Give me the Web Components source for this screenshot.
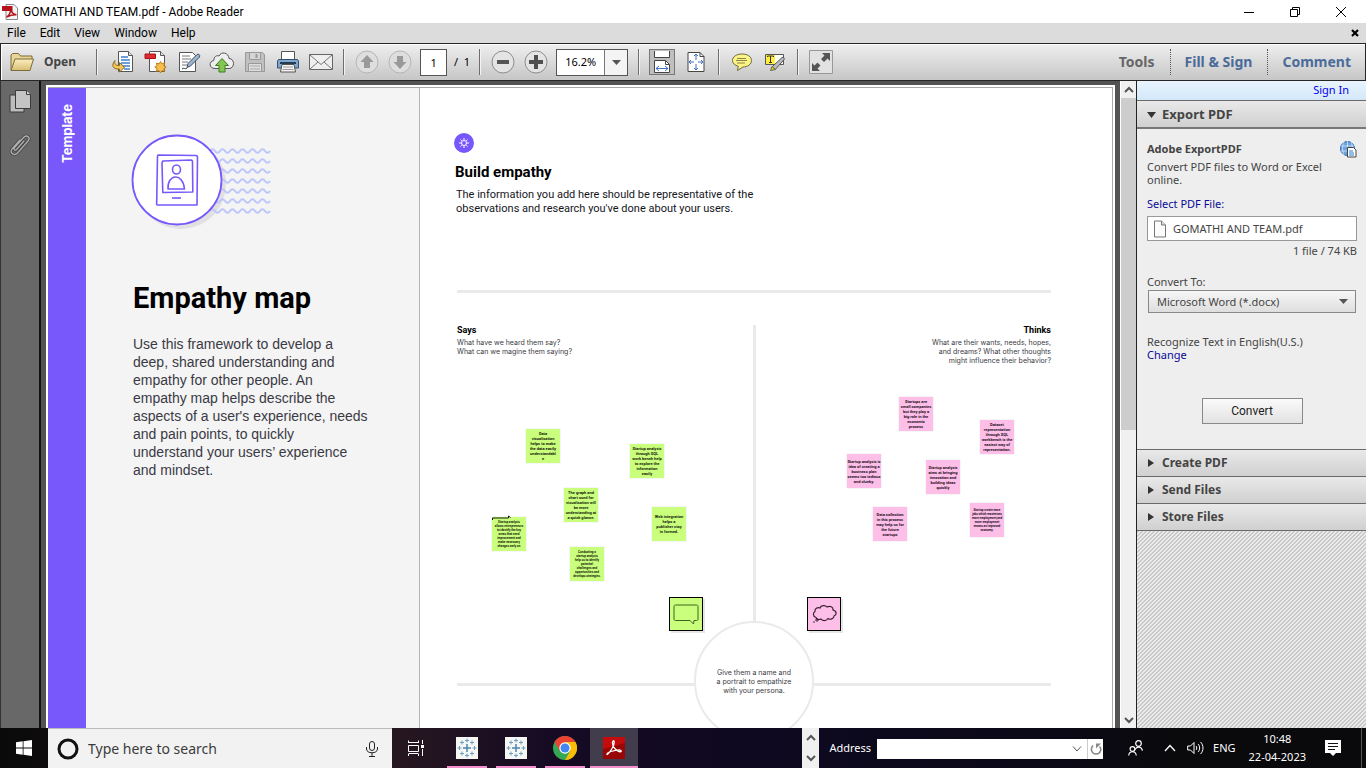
<!DOCTYPE html>
<html lang="en">
<head>
<meta charset="utf-8">
<title>GOMATHI AND TEAM.pdf - Adobe Reader</title>
<style>
html, body { margin: 0; height: 100%; }
body { font: 11px/16px "Noto Sans", "Open Sans", sans-serif; color: #333; overflow: hidden; background: #535353; }
</style>
</head>
<body>
<reader-app></reader-app>
<script>
const ICONS = {
  reader: [16, 16, `<path d="M4 .5h8l3.500 3.500v11.500h-11.500z" fill="#f4f4f4" stroke="#888"/><path d="M0 2h10.500v5h-10.500z" fill="#b5121b"/><path d="M4.500 13c2-1 4-4.500 4.300-8 .8 4 2.500 5.500 5.700 5.700-3.500-.2-6 .3-10 2.300z" fill="none" stroke="#b5121b" stroke-width="1.500"/>`],
  minimize: [10, 10, `<path d="M0 5.500h10" stroke="#000"/>`],
  restore: [10, 10, `<path d="M.5 2.500h7v7h-7zM2.500 2.500v-2h7v7h-2" fill="none" stroke="#000"/>`],
  close: [10, 10, `<path d="M0 0l10 10M10 0l-10 10" stroke="#000"/>`],
  closeBold: [8, 8, `<path d="M1 1l6 6M7 1l-6 6" stroke="#000" stroke-width="2.200"/>`],
  folder: [24, 20, `<defs><linearGradient id="a" x1="0" y1="0" x2="0" y2="1"><stop offset="0" stop-color="#fbefc0"/><stop offset="1" stop-color="#d9bd72"/></linearGradient></defs><path d="M1 18v-15l1.500-1.500h6l2 2.500h11.500v5" fill="#e9d595" stroke="#7a6a3c"/><path d="M1 18.500l4-11.500h18.500l-3.500 11.500z" fill="url(#a)" stroke="#7a6a3c"/>`],
  convert: [24, 24, `<path d="M7.500 1.500h10l4 4v16h-14z" fill="#fff" stroke="#555"/><path d="M17.500 1.500v4h4" fill="#ddd" stroke="#555"/><path d="M10 7h7M10 10h9M10 13h9M12 16h7M13 19h6" stroke="#3f7fcf" stroke-width="1.300"/><path d="M4 10.500c-4 4.500-2.500 9 4.500 8.500v3l5-4.700-5-4.800v3c-4 .5-5.500-2-4.500-5z" fill="#f3c55a" stroke="#8f6a17"/>`],
  create: [24, 24, `<path d="M5.500 1.500h11l4 4v16h-15z" fill="#fff" stroke="#555"/><path d="M16.500 1.500v4h4" fill="#ddd" stroke="#555"/><path d="M1 4h10.500v4.500h-10.500z" fill="#dd2c31" stroke="#a81318"/><path d="M16.500 11.500l1.400 2.300 2.700-.7-.7 2.700 2.300 1.400-2.300 1.400.7 2.700-2.700-.7-1.400 2.300-1.400-2.300-2.700.7.7-2.700-2.300-1.400 2.300-1.400-.7-2.700 2.700.7z" fill="#f7bd4d" stroke="#b87d18"/>`],
  sign: [24, 24, `<path d="M2.500 2.500h13l3 3v16h-16z" fill="#fff" stroke="#555"/><path d="M5 6h8M5 9h9M5 12h6M5 15h5" stroke="#777"/><path d="M5 19c2-2 3 1 5-1" fill="none" stroke="#333"/><path d="M10 17.500l1-4 9-9c1.500-1 3.500.5 2.500 2.500l-9 9z" fill="#9fb5cd" stroke="#3d5067"/>`],
  cloud: [26, 24, `<path d="M6 18.500c-6 0-6.500-7-1.200-8 0-4 3-5.500 5.300-4.500 2-5 9.500-3.500 9.900 2.500 6 0 6 10 0 10z" fill="#eee" stroke="#555"/><path d="M13 8.500l6.500 7h-3.500v6.500h-6v-6.500h-3.500z" fill="#83c554" stroke="#3d7c20"/>`],
  save: [22, 22, `<path d="M1.500 1.500h17l2 2v17h-19z" fill="#c0c0c0" stroke="#999"/><path d="M5.500 1.500h11v7h-11z" fill="#d6d6d6" stroke="#999"/><path d="M12.500 3v4" stroke="#999" stroke-width="2"/><path d="M4.500 12.500h13v8h-13z" fill="#dedede" stroke="#999"/><path d="M6 15h10M6 18h10" stroke="#aaa"/>`],
  print: [24, 24, `<path d="M5.500 1.500h13v9h-13z" fill="#fff" stroke="#555"/><path d="M2.500 9.500h19l1 1.500v7h-21v-7z" fill="#7fa6cf" stroke="#35516f"/><path d="M4 13h16" stroke="#263c55" stroke-width="2"/><path d="M6 14.500h12l1.500 7.500h-15z" fill="#f4f4f4" stroke="#555"/><path d="M7 17h10M6.500 19.500h11" stroke="#999"/>`],
  mail: [24, 18, `<path d="M.5 1.500h23v15h-23z" fill="#efefef" stroke="#666"/><path d="M1 2l11 9.500 11-9.500M1 16l8-7M23 16l-8-7" fill="none" stroke="#777"/>`],
  up: [24, 24, `<circle cx="12" cy="12" r="11" fill="#dedede" stroke="#b5b5b5"/><path d="M12 5l6.500 7h-3.500v6h-6v-6h-3.500z" fill="#999"/>`],
  down: [24, 24, `<circle cx="12" cy="12" r="11" fill="#dedede" stroke="#b5b5b5"/><path d="M12 19l6.500-7h-3.500v-6h-6v6h-3.500z" fill="#999"/>`],
  minus: [24, 24, `<circle cx="12" cy="12" r="11" fill="#e4e4e4" stroke="#8c8c8c"/><path d="M6 10h12v4h-12z" fill="#555"/>`],
  plus: [24, 24, `<circle cx="12" cy="12" r="11" fill="#e4e4e4" stroke="#8c8c8c"/><path d="M10 5h4v5h5v4h-5v5h-4v-5h-5v-4h5z" fill="#505050"/>`],
  fitWidth: [18, 22, `<path d="M1.500 0v6.500h15v-6.500" fill="#fff" stroke="#444"/><path d="M1.500 21.500v-12h11l4 4v8z" fill="#fff" stroke="#444"/><path d="M12.500 9.500v4h4" fill="none" stroke="#444"/><path d="M3 17.500h12M6 15l-3 2.500 3 2.500M12 15l3 2.500-3 2.500" fill="none" stroke="#3f6fc0"/>`],
  fitPage: [18, 22, `<path d="M1 1.500h12l4 4v15h-16z" fill="#fff" stroke="#444"/><path d="M13 1.500v4h4" fill="none" stroke="#444"/><path d="M9 3v6M9 13v6M2 11h5M11 11h5M7 5l2-2 2 2M7 17l2 2 2-2M4 9l-2 2 2 2M14 9l2 2-2 2" fill="none" stroke="#3f6fc0"/>`],
  comment: [22, 20, `<path d="M11 2c5.500 0 9.500 2.700 9.500 6.500s-4 6.500-8.500 6.500l-5.500 3.500.8-4.200c-3.500-1-5.800-3-5.800-5.800 0-3.800 4-6.500 9.500-6.500z" fill="#fdf487" stroke="#6d6a3a"/><path d="M6 6.500h9M5 8.500h11M6 11h8" stroke="#8a8547"/>`],
  highlight: [22, 20, `<path d="M1.500 2.500h18v10h-18z" fill="#fff" stroke="#555"/><path d="M2 3h9v9h-9z" fill="#ffee3d"/><path d="M3.500 5v-1h6v1M6.500 4v6.500M5 10.500h3" fill="none" stroke="#333"/><path d="M8 15l10-9.500c1.500-.8 3 .8 2 2.200l-9 10z" fill="#bbb" stroke="#555"/><path d="M6.500 18.500l1.500-4 3.500 3z" fill="#e8d400" stroke="#666"/>`],
  full: [24, 24, `<path d="M.5 .5h23v23h-23z" fill="#e2e2e2" stroke="#999"/><path d="M21 3v8l-2.500-2.500-3.500 3.500-3-3 3.500-3.500-2.500-2.500zM3 21v-8l2.500 2.500 3-3 3 3-3 3 2.500 2.500z" fill="#555"/>`],
  pages: [22, 24, `<path d="M1 6h14v17h-14z" fill="#bcbcbc" stroke="#3b3b3b"/><path d="M6.500 1.500h11l4 4v14h-15z" fill="#c4c4c4" stroke="#3b3b3b"/><path d="M17.500 1.500v4h4" fill="#ddd" stroke="#3b3b3b"/>`],
  clip: [22, 24, `<g fill="none" stroke-linecap="round" stroke-linejoin="round"><path id="c" d="M15 8l-7.500 8.500c-1.500 1.500-3.500 0-2-2l9.500-10.500c3-2.500 6.500.5 4.500 3.500l-11 12.500c-3.500 3.500-8 0-5.500-4l8-9" stroke="#474747" stroke-width="3"/><path d="M15 8l-7.500 8.500c-1.500 1.500-3.500 0-2-2l9.500-10.500c3-2.500 6.500.5 4.500 3.500l-11 12.500c-3.500 3.500-8 0-5.500-4l8-9" stroke="#b0b0b0" stroke-width="1.300"/></g>`],
  globe: [17, 17, `<circle cx="7.500" cy="7.500" r="7" fill="#6ba3dc" stroke="#2d68a8"/><path d="M1 5h13M1 10h13M7.500 0v15M4 1c-2 4-2 9 0 13M11 1c2 4 2 9 0 13" fill="none" stroke="#d7e9fa" stroke-width=".8"/><path d="M7.500 6.500h6l2.500 2.500v7h-8.500z" fill="#fff" stroke="#444"/><path d="M9 10h4M9 12h5M9 14h5" stroke="#2d78c8"/>`],
  file: [14, 18, `<path d="M1.500 1h7l4 4v12h-11z" fill="#fcfcfc" stroke="#777"/><path d="M8.500 1v4h4" fill="#ddd" stroke="#777"/>`],
  triDown: [9, 7, `<path d="M0 1h9l-4.500 6z" fill="#333"/>`],
  triRight: [9, 8, `<path d="M1 0l6 4-6 4z" fill="#333"/>`],
  chevUp: [10, 8, `<path d="M1 6l4-4 4 4" fill="none" stroke="#555" stroke-width="2"/>`],
  chevDown: [10, 8, `<path d="M1 2l4 4 4-4" fill="none" stroke="#555" stroke-width="2"/>`],
  caret: [9, 5, `<path d="M0 0h9l-4.500 5z" fill="#555"/>`],
  win: [16, 16, `<path d="M0 2.300l6.700-1v6.200h-6.700zM7.500 1.200l8.500-1.200v7.500h-8.500zM0 8.400h6.700v6.300l-6.700-1zM7.500 8.400h8.500v7.600l-8.500-1.200z" fill="#fff"/>`],
  cortana: [22, 22, `<circle cx="11" cy="11" r="9" fill="none" stroke="#111" stroke-width="3"/>`],
  mic: [12, 16, `<rect x="3.500" y=".5" width="5" height="9" rx="2.500" fill="none" stroke="#222"/><path d="M.5 6v2c0 5 11 5 11 0v-2M6 12v3M3 15.500h6" fill="none" stroke="#222"/>`],
  task: [18, 16, `<path d="M1.500 5.500h10v6h-10zM1.500 3v-2.500M1.500 2.500h10M11.500 3v-2.500M1.500 14v2M1.500 13.500h10M11.500 14v2M15.500 0v4M15.500 9v7" fill="none" stroke="#fff"/><path d="M14 5h3v3h-3z" fill="#fff"/>`],
  tableau: [22, 22, `<path d="M0 0h22v22h-22z" fill="#f6f6f4"/><path d="M11 7v8M7 11h8" stroke="#4e86ab" stroke-width="1.500"/><path d="M11 1.500v4M9 3.500h4M11 16.500v4M9 18.500h4M3.500 9v4M1.500 11h4M18.500 9v4M16.500 11h4M6 3.500v4M4 5.500h4M16 3.500v4M14 5.500h4M6 14.500v4M4 16.500h4M16 14.500v4M14 16.500h4" stroke="#6f9fc0"/>`],
  chrome: [24, 24, `<circle cx="12" cy="12" r="12" fill="#34a853"/><path d="M1.600 6a12 12 0 0 1 20.800 0h-10.400l-5.200 9z" fill="#ea4335"/><path d="M22.400 6a12 12 0 0 1-10.400 18l5.200-9-5.200-9z" fill="#fbbc05"/><circle cx="12" cy="12" r="5.700" fill="#fff"/><circle cx="12" cy="12" r="4.500" fill="#4285f4"/>`],
  acrobat: [22, 22, `<path d="M0 0h22v22h-22z" fill="#c40c0c"/><path d="M0 12l22-6v16h-22z" fill="#980606"/><path d="M4 17.500c-1-2 7-4.500 13-4.500 3 1 0 3-3 .5-4-3-5.500-8-4-9.500s2 3-1 7.500-4 6.500-5 6z" fill="none" stroke="#fff" stroke-width="1.300"/>`],
  reload: [12, 12, `<path d="M3 2.500c-3 3-1.500 8.500 3 8.500s6-5 3.500-7.500" fill="none" stroke="#888" stroke-width="1.600"/><path d="M6 .5h5l-5 5z" fill="#888"/>`],
  thinDown: [10, 6, `<path d="M1 .5l4 4.500 4-4.500" fill="none" stroke="#555"/>`],
  thinUp: [12, 8, `<path d="M1 7l5-5.500 5 5.500" fill="none" stroke="#fff" stroke-width="1.300"/>`],
  people: [15, 16, `<circle cx="10.500" cy="3.500" r="2.800" fill="none" stroke="#fff" stroke-width="1.200"/><path d="M7 9.500c2-3.500 6.500-3 7.500 1" fill="none" stroke="#fff" stroke-width="1.200"/><circle cx="4.500" cy="9" r="2.400" fill="none" stroke="#fff" stroke-width="1.200"/><path d="M.700 15.500c.5-5 7-5 7.600 0" fill="none" stroke="#fff" stroke-width="1.200"/>`],
  sound: [17, 14, `<path d="M.700 5h2.800l3.500-3.500v11l-3.500-3.500h-2.800z" fill="none" stroke="#fff"/><path d="M9 5c1 1 1 3 0 4M11 3c2.200 2 2.200 6 0 8M13.500 1c3.300 3 3.300 9 0 12" fill="none" stroke="#fff"/>`],
  notify: [16, 16, `<path d="M0 0h16v13h-5l-3 3-3-3h-5z" fill="#fff"/><path d="M3 3.500h10M3 6.500h10M3 9.500h7" stroke="#111"/>`],
  sun: [20, 20, `<circle cx="10" cy="10" r="10" fill="#7757fb"/><circle cx="10" cy="10" r="2.500" fill="none" stroke="#fff"/><path d="M10 5v2M10 13v2M5 10h2M13 10h2M6.500 6.500l1.300 1.300M12.200 12.200l1.300 1.300M13.500 6.500l-1.300 1.300M7.800 12.200l-1.300 1.300" stroke="#fff"/>`],
  speech: [34, 34, `<path d="M6.500 8h21c1 0 1.500.5 1.500 1.500v12.500c0 1-.5 1.500-1.500 1.500h-2.500l-.5 3.500-3.500-3.500h-14.500c-1 0-1.500-.5-1.500-1.500v-12.500c0-1 .5-1.500 1.500-1.500z" fill="none" stroke="#40621f"/>`],
  thought: [34, 34, `<path d="M9 20.500c-3.500-1-3-5-1-6-.5-3 2.500-4.500 5-3.500 1-3 5.500-3 7-1 3-1.500 6.500 0 6 3 4 1 4 4.500 1 6 0 3-4 4-6 2.500-2 3-5.500 2.500-7 .5-2 1-4.500.5-5-1.500z" fill="none" stroke="#3a1c33" stroke-width="1.200"/><circle cx="10" cy="23" r="1.200" fill="none" stroke="#3a1c33"/><circle cx="7" cy="25" r=".8" fill="#3a1c33"/>`]
};

function define(name, html, setup) {
  const template = document.createElement('template');
  template.innerHTML = html;
  customElements.define(name, class extends HTMLElement {
    connectedCallback() {
      if (this.shadowRoot) return;
      this.attachShadow({ mode: 'open' }).append(template.content.cloneNode(true));
      if (setup) setup(this, this.shadowRoot);
    }
  });
}

define('app-icon', `<style>:host{display:inline-flex;flex:none}svg{display:block}</style>`, (host, root) => {
  const [w, h, body] = ICONS[host.getAttribute('name')];
  const holder = document.createElement('template');
  holder.innerHTML = `<svg width="${w}" height="${h}" viewBox="0 0 ${w} ${h}" aria-hidden="true">${body}</svg>`;
  root.append(holder.content);
});

define('icon-button', `<style>
:host{display:flex;flex:none;width:33px}
button{flex:1;display:flex;align-items:center;justify-content:center;background:none;border:0;padding:0;min-width:0}
:host([pressed]) button{background:#bfbfbf;border:1px solid #777;height:26px}
:host([running]) button{box-shadow:inset 0 -2px #f48fce}
:host([active]) button{background:#413d4c}
</style><button type="button"><slot></slot></button>`, (host, root) => {
  root.querySelector('button').setAttribute('aria-label', host.getAttribute('label') || '');
});

define('title-bar', `<style>
:host{display:flex;align-items:center;height:23px;flex:none;background:#fff;padding:0 2px;font:12px/16px Roboto,"Open Sans",sans-serif;color:#000}
span{flex:1;margin-left:5px}
icon-button{width:46px;height:20px}
</style><app-icon name="reader"></app-icon><span>GOMATHI AND TEAM.pdf - Adobe Reader</span>
<icon-button label="Minimize"><app-icon name="minimize"></app-icon></icon-button>
<icon-button label="Restore"><app-icon name="restore"></app-icon></icon-button>
<icon-button label="Close"><app-icon name="close"></app-icon></icon-button>`);

define('menu-bar', `<style>
:host{display:flex;align-items:center;height:20px;flex:none;background:#dcdcdc;padding:0 7px;gap:14px;font:12px/16px Roboto,"Open Sans",sans-serif}
button{background:none;border:0;padding:0;font:inherit;color:#000}
icon-button{width:8px;margin-left:auto}
</style><button>File</button><button>Edit</button><button>View</button><button>Window</button><button>Help</button>
<icon-button label="Close document"><app-icon name="closeBold"></app-icon></icon-button>`);

define('tool-group', `<style>
:host{display:flex;align-items:center;flex:none;height:36px;padding:0 6px}
:host([divided])::after{content:"";width:1px;height:26px;background:#6e6e6e;margin-left:6px;margin-right:-6px;box-shadow:1px 0 #f4f4f4}
</style><slot></slot>`);

define('tool-bar', `<style>
:host{display:flex;align-items:center;flex:none;height:36px;border:1px solid #262626;background:linear-gradient(#efefef,#c6c6c6);box-shadow:inset 1px 1px #fff;color:#000}
.open{display:flex;align-items:center;gap:10px;background:none;border:0;padding:0 14px 0 3px;font:bold 12px/16px "Noto Sans",sans-serif;color:#444}
.files{padding-left:9px}
.num{box-sizing:border-box;width:27px;height:27px;border:1px solid #555;margin:0 7px 0 4px;padding:0;text-align:center;font:inherit;color:#000;background:#fff}
.count{margin-right:3px}
.zoom{position:relative;display:flex;margin:0 4px;background:#fff;border:1px solid #555}
select{appearance:none;border:0;background:none;width:70px;height:25px;padding:0 0 0 8px;font:inherit;color:#000}
.zoom span{position:absolute;right:0;top:0;bottom:0;width:22px;border-left:1px solid #777;display:grid;place-items:center;background:#f4f4f4;pointer-events:none}
icon-button[pressed]{width:26px;margin:0 4px}
.tabs{display:flex;margin-left:auto}
.tabs button{background:none;border:0;border-left:1px dotted #555;padding:0 14px;font:bold 14px/26px "Noto Sans",sans-serif;color:#4b6b99}
.tabs button:first-child{border:0;color:#666;padding-right:15px}
.tabs button:nth-child(2){padding-right:15px}
</style>
<tool-group divided><button class="open"><app-icon name="folder"></app-icon>Open</button></tool-group>
<tool-group divided class="files">
<icon-button label="Convert"><app-icon name="convert"></app-icon></icon-button>
<icon-button label="Create PDF"><app-icon name="create"></app-icon></icon-button>
<icon-button label="Sign"><app-icon name="sign"></app-icon></icon-button>
<icon-button label="Upload"><app-icon name="cloud"></app-icon></icon-button>
<icon-button label="Save"><app-icon name="save"></app-icon></icon-button>
<icon-button label="Print"><app-icon name="print"></app-icon></icon-button>
<icon-button label="Email"><app-icon name="mail"></app-icon></icon-button></tool-group>
<tool-group divided>
<icon-button label="Previous page"><app-icon name="up"></app-icon></icon-button>
<icon-button label="Next page"><app-icon name="down"></app-icon></icon-button>
<input class="num" aria-label="Page" value="1"><span class="count">/&nbsp; 1</span></tool-group>
<tool-group divided>
<icon-button label="Zoom out"><app-icon name="minus"></app-icon></icon-button>
<icon-button label="Zoom in"><app-icon name="plus"></app-icon></icon-button>
<div class="zoom"><select aria-label="Zoom"><option>16.2%</option></select><span><app-icon name="caret"></app-icon></span></div></tool-group>
<tool-group divided>
<icon-button pressed label="Fit width"><app-icon name="fitWidth"></app-icon></icon-button>
<icon-button label="Fit page"><app-icon name="fitPage"></app-icon></icon-button></tool-group>
<tool-group divided>
<icon-button label="Add note"><app-icon name="comment"></app-icon></icon-button>
<icon-button label="Highlight"><app-icon name="highlight"></app-icon></icon-button></tool-group>
<tool-group><icon-button label="Full screen"><app-icon name="full"></app-icon></icon-button></tool-group>
<div class="tabs"><button>Tools</button><button>Fill &amp; Sign</button><button>Comment</button></div>`);

define('nav-rail', `<style>
:host{display:flex;flex-direction:column;align-items:center;gap:20px;flex:none;width:38px;padding-top:8px;background:#686868;border-left:1px solid #333;border-right:2px solid #111}
icon-button{height:24px}
</style><icon-button label="Pages"><app-icon name="pages"></app-icon></icon-button>
<icon-button label="Attachments"><app-icon name="clip"></app-icon></icon-button>`);

define('sticky-note', `<style>
:host{position:absolute;left:calc(50% + var(--x));top:var(--y);width:34px;height:34px;display:flex;align-items:center;justify-content:center;background:#c9ff7d;color:#16210a;font:bold 4px/5px Roboto,sans-serif;text-align:center;white-space:nowrap;box-shadow:0 0 1px #c9c9c9}
:host([pink]){background:#fdbfe8;color:#240f1d}
:host([small]){font-size:3px;line-height:4px}
:host([stamp]){outline:1px solid #000;outline-offset:-1px;box-shadow:2px 2px #e6e6e6}
</style><div><slot></slot></div>`);

define('template-cover', `<style>
:host{display:flex;flex:none;width:371px;background:#f4f4f4;border-right:1px solid #b5b5b5}
.strip{flex:none;width:38px;background:#7858fb;color:#fff;display:flex;justify-content:flex-end}
.strip b{writing-mode:vertical-rl;transform:rotate(180deg);font:bold 13px/38px Inter,sans-serif;padding-bottom:15px;height:60px}
.body{padding:45px 0 0 47px;color:#3a3a44;font:14px/18px "Liberation Sans",Arial,sans-serif}
svg{display:block;overflow:visible}
h1{margin:51px 0 19px;font:bold 29px/36px Roboto,sans-serif;color:#000}
p{margin:0}
</style>
<div class="strip"><b>Template</b></div>
<div class="body">
<svg width="138" height="96" viewBox="2 0 138 96" fill="none" aria-hidden="true">
<circle cx="50" cy="51" r="45" fill="#e1e1e1"/>
<g class="waves" stroke="#bcc6fb" stroke-width="2"></g>
<circle cx="46" cy="47" r="44.500" fill="#fff" stroke="#7858fb" stroke-width="1.800"/>
<g stroke="#7858fb" stroke-width="1.600" stroke-linejoin="round"><path d="M27 22l38 .5c1 0 1.500.5 1.500 1.500l-.5 48h-39.500c-1 0-1-1-.8-2l.8-47zM32 28l28-1c1 0 1.500 1 1.500 2l.3 30-30 .5-.8-29c0-1 .3-2 1-2.500zM37 56c-1-15 15-17 16.500 0z"/><ellipse cx="45.500" cy="36.500" rx="4" ry="4.500"/><path d="M41 65h9"/></g>
</svg>
<h1>Empathy map</h1>
<p>Use this framework to develop a<br>deep, shared understanding and<br>empathy for other people. An<br>empathy map helps describe the<br>aspects of a user's experience, needs<br>and pain points, to quickly<br>understand your users’ experience<br>and mindset.</p>
</div>`, (host, root) => {
  const waves = root.querySelector('.waves');
  for (let i = 0; i < 7; i++) {
    const path = document.createElementNS('http://www.w3.org/2000/svg', 'path');
    path.setAttribute('d', `M79 ${18 + i * 10}q2.500-3.500 5 0t5 0t5 0t5 0t5 0t5 0t5 0t5 0t5 0t5 0t5 0t5 0`);
    waves.append(path);
  }
});

define('empathy-map', `<style>
:host{display:block;position:relative;color:#3a3a44;font:7px/9px Inter,Roboto,sans-serif}
.row{display:grid;grid-template-columns:1fr 3px 1fr;min-height:358px}
.bar{background:#eaeaea}
.rule{height:3px;background:#eaeaea}
h3{margin:0 0 3px;font:bold 9px/10px Roboto,sans-serif;color:#000}
p{margin:0}
.right{text-align:right}
.persona{position:absolute;left:calc(50% - 60px);top:296px;width:116px;height:116px;border:2px solid #eaeaea;border-radius:50%;background:#fff;display:grid;place-items:center;text-align:center}
svg{position:absolute;left:calc(50% - 262px);top:190px}
</style>
<div class="row"><div><h3>Says</h3><p>What have we heard them say?<br>What can we magine them saying?</p></div><div class="bar"></div>
<div class="right"><h3>Thinks</h3><p>What are their wants, needs, hopes,<br>and dreams? What other thoughts<br>might influence their behavior?</p></div></div>
<div class="rule"></div>
<div class="row"><div></div><div class="bar"></div><div></div></div>
<div class="persona">Give them a name and<br>a portrait to empathize<br>with your persona.</div>
<slot></slot>
<svg width="20" height="6" viewBox="0 0 20 6" aria-hidden="true"><path d="M.5 5v-2h16v-2l2 1.500" fill="none" stroke="#14200a"/></svg>`);

define('pdf-page', `<style>
:host{display:flex;background:#fff;border:2px solid #fff;border-bottom:0;flex:1;min-width:0;min-height:0;overflow:hidden}
.sheet{display:flex;flex:1;border:1px solid #a9a9a9;border-left:0;border-bottom:0;min-width:0}
.content{flex:1;padding:45px 61px 0 37px}
h2{margin:9px 0 6px -2px;font:bold 15px/20px Roboto,sans-serif;color:#000}
p{margin:0 0 74px -1px;font:11px/14px Roboto,sans-serif;color:#16161c}
.rule{height:3px;background:#eaeaea;margin-bottom:32px}
.badge{display:block;margin-left:-3px;height:20px}
</style>
<div class="sheet"><template-cover></template-cover>
<div class="content"><app-icon class="badge" name="sun"></app-icon>
<h2>Build empathy</h2>
<p>The information you add here should be representative of the<br>observations and research you've done about your users.</p>
<div class="rule"></div>
<empathy-map>
<sticky-note style="--x:-228px;--y:104px">Data<br>visualisation<br>helps to make<br>the data easily<br>understandabl<br>e</sticky-note>
<sticky-note style="--x:-124px;--y:119px">Startup analysis<br>through SQL<br>work bench help<br>to explore the<br>information<br>easily</sticky-note>
<sticky-note style="--x:-190px;--y:163px">The graph and<br>chart used for<br>visualisation will<br>be more<br>understanding at<br>a quick glance.</sticky-note>
<sticky-note style="--x:-102px;--y:182px">Web integration<br>helps a<br>publisher stay<br>in formed.</sticky-note>
<sticky-note small style="--x:-262px;--y:192px">Startup analysis<br>allows entrepreneurs<br>to identify the key<br>areas that need<br>improvement and<br>make necessary<br>changes early on</sticky-note>
<sticky-note small style="--x:-184px;--y:222px">Conducting a<br>startup analysis<br>help us to identify<br>potential<br>challenges and<br>opportunities and<br>develops strategies.</sticky-note>
<sticky-note pink style="--x:145px;--y:72px">Startups are<br>small companies<br>but they play a<br>big role in the<br>economic<br>process</sticky-note>
<sticky-note pink style="--x:226px;--y:95px">Dataset<br>representation<br>through SQL<br>workbench is the<br>easiest way of<br>representation.</sticky-note>
<sticky-note pink style="--x:93px;--y:129px">Startup analysis is<br>idea of creating a<br>business plan<br>seems too tedious<br>and clunky.</sticky-note>
<sticky-note pink style="--x:172px;--y:135px">Startup analysis<br>aims at bringing<br>innovation and<br>building ideas<br>quickly</sticky-note>
<sticky-note pink style="--x:119px;--y:182px">Data collection<br>in this process<br>may help us for<br>the future<br>startups</sticky-note>
<sticky-note pink small style="--x:216px;--y:178px">Startup create more<br>jobs which maximizes<br>more employment,and<br>more employment<br>means an improved<br>economy.</sticky-note>
<sticky-note stamp style="--x:-85px;--y:272px"><app-icon name="speech"></app-icon></sticky-note>
<sticky-note stamp pink style="--x:53px;--y:272px"><app-icon name="thought"></app-icon></sticky-note>
</empathy-map></div></div>`);

define('doc-view', `<style>
:host{display:flex;flex:1;min-width:0;background:#535353}
.pane{display:flex;flex:1;min-width:0;padding:4px 5px 0 5px}
.scroll{flex:none;width:15px;display:flex;flex-direction:column;align-items:center;background:#f0f0f0;border-left:1px solid #fff}
.scroll icon-button{width:15px;height:17px}
.thumb{width:15px;flex:1 1 332px;background:#cdcdcd}
.track{flex:1 1 281px}
</style><div class="pane"><pdf-page></pdf-page></div>
<div class="scroll"><icon-button label="Scroll up"><app-icon name="chevUp"></app-icon></icon-button><div class="thumb"></div><div class="track"></div><icon-button label="Scroll down"><app-icon name="chevDown"></app-icon></icon-button></div>`);

define('panel-head', `<style>
:host{display:flex;flex:none}
button{flex:1;display:flex;align-items:center;gap:6px;height:27px;border:0;border-top:1px solid #6a6a6a;padding:0 10px;background:linear-gradient(#e9e9e9,#d0d0d0);font:bold 13px/18px "Noto Sans",sans-serif;color:#444}
:host([small]) button{font-size:12px}
</style><button><slot></slot></button>`);

define('tools-panel', `<style>
:host{display:flex;flex-direction:column;flex:none;width:229px;border-left:1px solid #222;background:#eee;color:#444}
.signin{flex:none;height:19px;line-height:18px;text-align:right;padding-right:17px;background:linear-gradient(#e9f4fe,#d4e8f9)}
a{color:#00e;text-decoration:none}
.body{flex:none;border-top:2px solid #777;padding:12px 9px 0 10px;line-height:13px;height:308px}
.top{display:flex;justify-content:space-between;height:19px}
.top b{line-height:16px}
.body a,.sel{color:#0a0a96;display:block}
.sel{margin-top:11px;margin-bottom:6px}
.file{display:flex;gap:6px;align-items:center;height:23px;border:1px solid #999;background:#fff;padding:0 5px;line-height:20px}
.size{text-align:right;margin:3px 0 18px}
.combo{position:relative;margin:2px 1px 22px}
select{appearance:none;width:100%;height:23px;border:1px solid #888;border-radius:0;background:linear-gradient(#f6f6f6,#dedede);font:inherit;color:#444;padding:0 8px}
.combo app-icon{position:absolute;right:8px;top:9px;pointer-events:none}
.go{display:block;margin:37px auto 0;width:101px;height:26px;border:1px solid #888;background:linear-gradient(#fafafa,#e2e2e2);font:12px/16px Roboto,sans-serif;color:#222}
.rest{flex:1;border-top:1px solid #6a6a6a;background:linear-gradient(135deg,#c8c8c8 25%,#ececec 25% 50%,#c8c8c8 50% 75%,#ececec 75%) 0 0/4px 4px}
</style>
<div class="signin"><a href="#signin">Sign In</a></div>
<panel-head><app-icon name="triDown"></app-icon>Export PDF</panel-head>
<div class="body">
<div class="top"><b>Adobe ExportPDF</b><app-icon name="globe"></app-icon></div>
<div>Convert PDF files to Word or Excel<br>online.</div>
<a class="sel" href="#select">Select PDF File:</a>
<div class="file"><app-icon name="file"></app-icon><span>GOMATHI AND TEAM.pdf</span></div>
<div class="size">1 file / 74 KB</div>
<label for="format">Convert To:</label>
<div class="combo"><select id="format"><option>Microsoft Word (*.docx)</option></select><app-icon name="caret"></app-icon></div>
<div>Recognize Text in English(U.S.)</div><a href="#change">Change</a>
<button class="go">Convert</button>
</div>
<panel-head small><app-icon name="triRight"></app-icon>Create PDF</panel-head>
<panel-head small><app-icon name="triRight"></app-icon>Send Files</panel-head>
<panel-head small><app-icon name="triRight"></app-icon>Store Files</panel-head>
<div class="rest"></div>`);

define('task-bar', `<style>
:host{display:flex;flex:none;height:40px;align-items:stretch;background:linear-gradient(90deg,#0a0a0a 0,#26171f 29%,#170b24 40%,#0e0920 55%,#0b0818 75%,#0a0a0c 86%);color:#fff}
.start{width:48px}
.search{box-sizing:border-box;width:344px;flex:none;display:flex;align-items:center;background:#f2f2f2;border-top:1px solid #bbb;padding:0 14px 0 9px;gap:9px}
.search input{flex:1;min-width:0;border:0;padding:0;background:none;font:14px/20px "Noto Sans",sans-serif}
.search input::placeholder{color:#3b3b3b;opacity:1}
.apps{display:flex;gap:9px}
.apps icon-button{width:40px}
.apps .task{width:48px;margin-right:-2px}
.apps icon-button[active]{width:48px;margin-left:-4px}
.space{flex:1}
.updown{flex:none;width:17px;display:flex;flex-direction:column;background:#f0f0f0}
.updown icon-button{width:17px;height:20px}
.addr{display:flex;align-items:center;gap:6px;padding:0 22px 0 10px}
.field{display:flex;width:226px;height:20px;margin-top:2px;background:#fff}
.field input{flex:1;min-width:0;border:0;padding:0 4px;background:none}
.field icon-button{width:20px}
.field icon-button+icon-button{width:15px;border-left:1px solid #ccc}
.tray{display:flex;align-items:center}
.tray icon-button{height:40px}
.tray .people{width:20px;margin-right:12px}
.tray .more{width:26px}
.tray .volume{width:24px;margin-right:6px}
.clock{text-align:center;line-height:18px;padding:0 10px 0 13px}
.end{margin:0 4px 0 12px;border-right:1px solid #555}
</style>
<icon-button class="start" label="Start"><app-icon name="win"></app-icon></icon-button>
<div class="search"><app-icon name="cortana"></app-icon><input aria-label="Search" placeholder="Type here to search"><app-icon name="mic"></app-icon></div>
<div class="apps">
<icon-button class="task" label="Task view"><app-icon name="task"></app-icon></icon-button>
<icon-button running label="Tableau"><app-icon name="tableau"></app-icon></icon-button>
<icon-button running label="Tableau"><app-icon name="tableau"></app-icon></icon-button>
<icon-button running label="Chrome"><app-icon name="chrome"></app-icon></icon-button>
<icon-button running active label="Adobe Reader"><app-icon name="acrobat"></app-icon></icon-button></div>
<div class="space"></div>
<div class="updown"><icon-button label="Up"><app-icon name="chevUp"></app-icon></icon-button><icon-button label="Down"><app-icon name="chevDown"></app-icon></icon-button></div>
<div class="addr"><label for="address">Address</label><div class="field"><input id="address"><icon-button label="History"><app-icon name="thinDown"></app-icon></icon-button><icon-button label="Refresh"><app-icon name="reload"></app-icon></icon-button></div></div>
<div class="tray">
<icon-button class="people" label="People"><app-icon name="people"></app-icon></icon-button>
<icon-button class="more" label="Hidden icons"><app-icon name="thinUp"></app-icon></icon-button>
<icon-button class="volume" label="Volume"><app-icon name="sound"></app-icon></icon-button>
<span>ENG</span>
<div class="clock">10:48<br>22-04-2023</div>
<icon-button label="Notifications"><app-icon name="notify"></app-icon></icon-button></div>
<div class="end"></div>`);

define('reader-app', `<style>
:host{display:flex;flex-direction:column;height:100vh;overflow:hidden}
main{flex:1;display:flex;min-height:0}
</style>
<title-bar></title-bar><menu-bar></menu-bar><tool-bar></tool-bar>
<main><nav-rail></nav-rail><doc-view></doc-view><tools-panel></tools-panel></main>
<task-bar></task-bar>`);
</script>
</body>
</html>
